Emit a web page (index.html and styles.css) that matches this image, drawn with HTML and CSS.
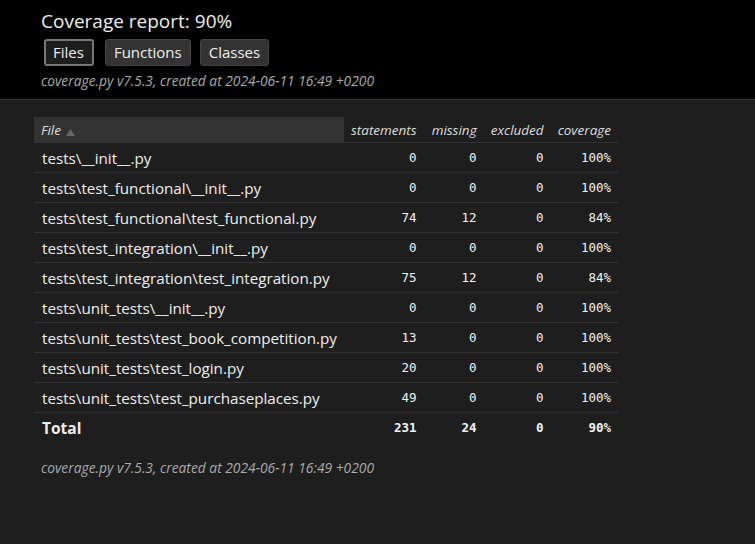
FILE: index.html
```html
<!DOCTYPE html>
<html>
<head>
<meta charset="utf-8">
<title>Coverage report</title>
<link rel="stylesheet" href="styles.css">
</head>
<body>
<header class="top">
  <div class="top-content">
    <h1 class="title">Coverage report: <span class="pc">90%</span></h1>
    <nav class="tabs">
      <a class="button current">Files</a>
      <a class="button">Functions</a>
      <a class="button">Classes</a>
    </nav>
    <p class="meta">coverage.py v7.5.3, created at 2024-06-11 16:49 +0200</p>
  </div>
</header>
<main class="index">
  <table class="report">
    <thead>
      <tr class="head">
        <th class="name sorted">File<span class="arrow"><svg width="9" height="7" viewBox="0 0 9 7"><polygon points="4.5,0 9,7 0,7" fill="#666"/></svg></span></th>
        <th class="c-st">statements</th>
        <th class="c-mi">missing</th>
        <th class="c-ex">excluded</th>
        <th class="c-cv">coverage</th>
      </tr>
    </thead>
    <tbody>
      <tr><td class="name">tests\__init__.py</td><td>0</td><td>0</td><td>0</td><td>100%</td></tr>
      <tr><td class="name">tests\test_functional\__init__.py</td><td>0</td><td>0</td><td>0</td><td>100%</td></tr>
      <tr><td class="name">tests\test_functional\test_functional.py</td><td>74</td><td>12</td><td>0</td><td>84%</td></tr>
      <tr><td class="name">tests\test_integration\__init__.py</td><td>0</td><td>0</td><td>0</td><td>100%</td></tr>
      <tr><td class="name">tests\test_integration\test_integration.py</td><td>75</td><td>12</td><td>0</td><td>84%</td></tr>
      <tr><td class="name">tests\unit_tests\__init__.py</td><td>0</td><td>0</td><td>0</td><td>100%</td></tr>
      <tr><td class="name">tests\unit_tests\test_book_competition.py</td><td>13</td><td>0</td><td>0</td><td>100%</td></tr>
      <tr><td class="name">tests\unit_tests\test_login.py</td><td>20</td><td>0</td><td>0</td><td>100%</td></tr>
      <tr><td class="name">tests\unit_tests\test_purchaseplaces.py</td><td>49</td><td>0</td><td>0</td><td>100%</td></tr>
    </tbody>
    <tfoot>
      <tr class="total"><td class="name">Total</td><td>231</td><td>24</td><td>0</td><td>90%</td></tr>
    </tfoot>
  </table>
</main>
<footer class="foot">
  <p class="meta">coverage.py v7.5.3, created at 2024-06-11 16:49 +0200</p>
</footer>
</body>
</html>
```

FILE: styles.css
```css
html, body {
  margin: 0;
  padding: 0;
}
body {
  background: #1e1e1e;
  color: #eee;
  font-family: "Open Sans", "Noto Sans", sans-serif;
  font-size: 14px;
  width: 755px;
  height: 544px;
  overflow: hidden;
}
.top {
  background: #000;
  border-bottom: 1px solid #333;
  height: 99px;
  box-sizing: content-box;
}
.top-content {
  padding: 8px 41px 0 41px;
}
.title {
  margin: 0;
  font-size: 19px;
  font-weight: normal;
  line-height: 27px;
}
.tabs {
  display: flex;
  gap: 9px;
  margin: 4px 0 0 3px;
}
.button {
  display: block;
  box-sizing: border-box;
  height: 27px;
  line-height: 25px;
  padding: 0 8px;
  border: 1px solid #444;
  border-radius: 3px;
  background: #333;
  color: #eee;
  font-size: 15px;
}
.button.current {
  border: 2px solid #777;
  background: #1e1e1e;
  line-height: 23px;
  padding: 0 8px 0 7px;
  margin-right: 2px;
}
.meta {
  margin: 6px 0 0 0;
  color: #aaa;
  font-style: italic;
  font-size: 13.8px;
  line-height: 18px;
}
.index {
  padding: 17px 0 0 34px;
}
.report {
  border-collapse: collapse;
  width: 584px;
  font-family: "DejaVu Sans Mono", monospace;
  font-size: 12.5px;
}
.report th {
  font-family: "Open Sans", "Noto Sans", sans-serif;
  font-style: italic;
  font-weight: normal;
  color: #ddd;
  font-size: 13.5px;
  line-height: 18px;
  text-align: right;
  padding: 0 7px;
  height: 25px;
  border-bottom: 1px solid #333;
  white-space: nowrap;
}
.report th.name {
  text-align: left;
}
.report th.sorted {
  background: #333;
}
.arrow {
  display: inline-block;
  margin-left: 5px;
  vertical-align: -1px;
}
.arrow svg {
  display: block;
}
.c-st { width: 65px; }
.c-mi { width: 46px; }
.c-ex { width: 53px; }
.c-cv { width: 53px; }
.report td {
  text-align: right;
  padding: 0 7px;
  height: 29px;
  line-height: 18px;
  vertical-align: middle;
  border-bottom: 1px solid #333;
  white-space: nowrap;
  color: #f2f2f2;
}
.report td.name {
  text-align: left;
  font-family: "Open Sans", "Noto Sans", sans-serif;
  font-size: 15.2px;
  line-height: 20px;
  padding-left: 8px;
  color: #eee;
}
.report tfoot td {
  border-bottom: none;
  font-weight: bold;
  vertical-align: top;
  padding-top: 6px;
  height: 24px;
}
.report tfoot td.name {
  font-size: 15.5px;
  padding-top: 5px;
  height: 25px;
}
.foot {
  padding: 16px 0 0 41px;
}
.foot .meta {
  margin: 0;
}
```
